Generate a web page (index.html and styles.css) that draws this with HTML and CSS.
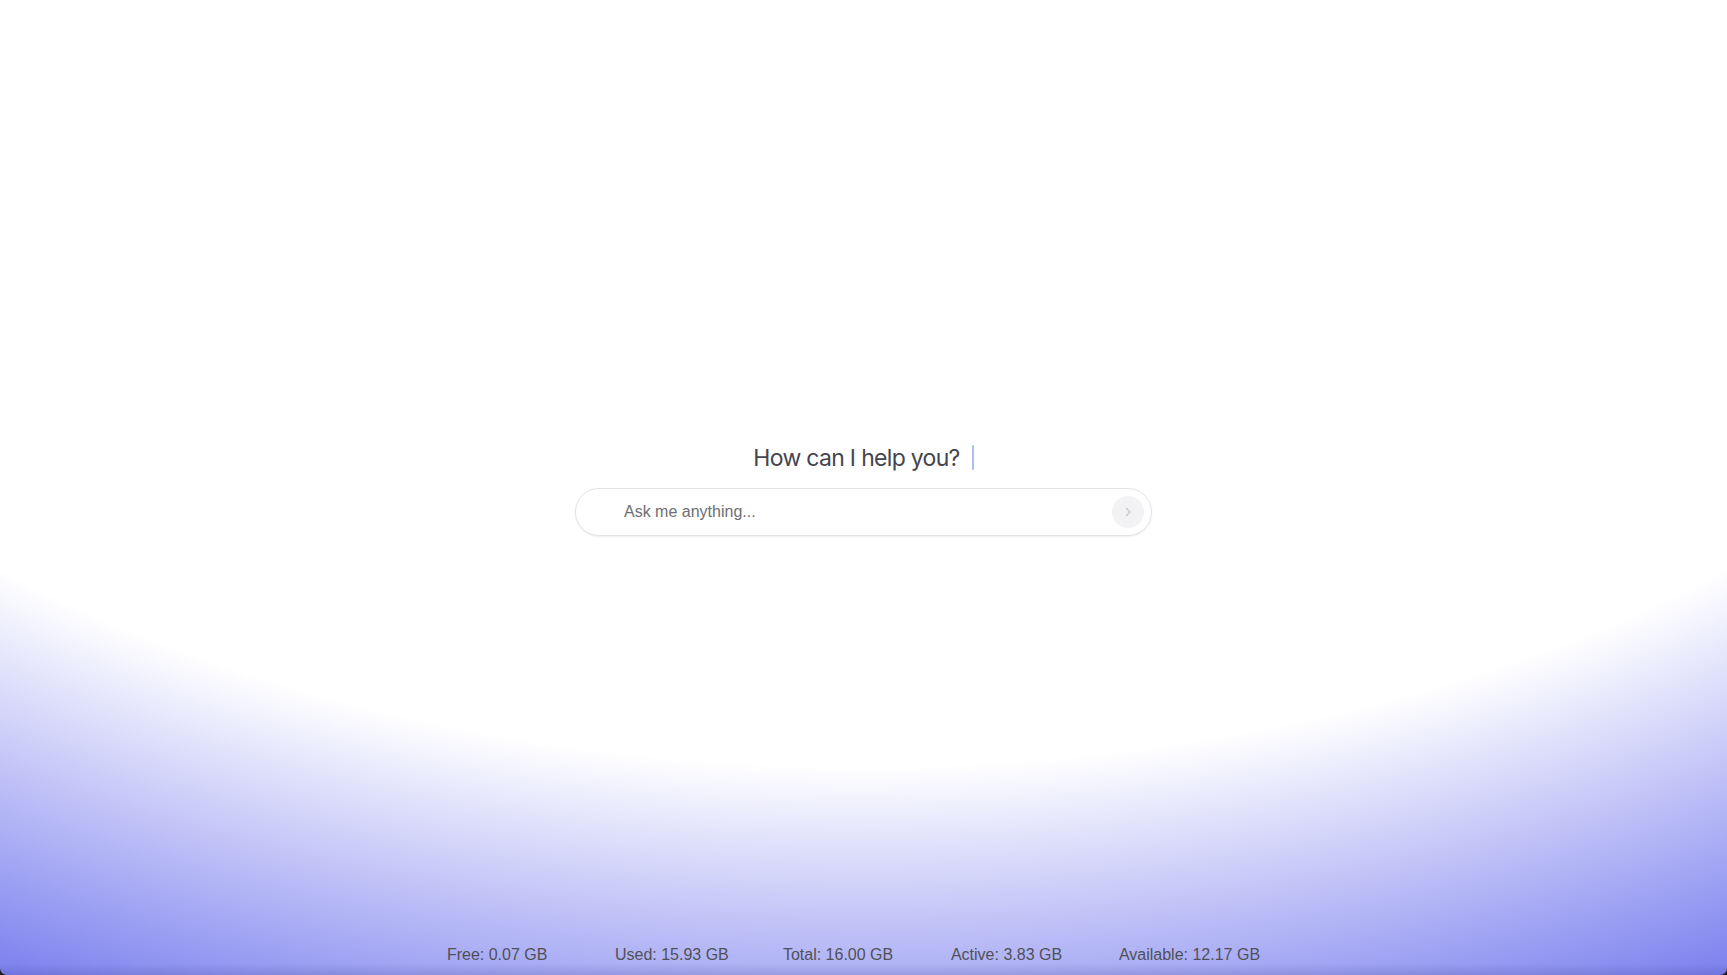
FILE: index.html
```html
<!DOCTYPE html>
<html lang="en">
<head>
<meta charset="utf-8">
<title>Assistant</title>
<link rel="stylesheet" href="styles.css">
</head>
<body>
<div class="app">
  <main class="main">
    <div class="prompt">
      <h1 class="title">How can I help you?</h1>
      <span class="caret"></span>
    </div>
    <form class="search">
      <input class="search-input" type="text" placeholder="Ask me anything...">
      <button class="send" type="button" aria-label="Send">
        <svg width="10" height="10" viewBox="0 0 10 10" fill="none"><path d="M3.5 1.5 L7 5 L3.5 8.5" stroke="#c2c3c9" stroke-width="1.2" stroke-linecap="round" stroke-linejoin="round"/></svg>
      </button>
    </form>
  </main>
  <footer class="stats">
    <span class="stat">Free: 0.07 GB</span>
    <span class="stat">Used: 15.93 GB</span>
    <span class="stat">Total: 16.00 GB</span>
    <span class="stat">Active: 3.83 GB</span>
    <span class="stat">Available: 12.17 GB</span>
  </footer>
</div>
</body>
</html>
```
FILE: styles.css
```css
html, body {
  margin: 0;
  padding: 0;
  height: 100%;
  background: #1e1f1e;
}
body {
  font-family: "Liberation Sans", Arial, sans-serif;
}
.app {
  height: 100vh;
  display: flex;
  flex-direction: column;
  border-radius: 0 0 7px 7px;
  overflow: hidden;
  background:
    linear-gradient(to top, rgba(50, 52, 120, 0.16), rgba(50, 52, 120, 0) 12px),
    radial-gradient(ellipse 1852px 1101px at 50% 0, #ffffff 69.6%, #7b80ee 100%);
}
.main {
  flex: 1;
  display: flex;
  flex-direction: column;
  align-items: center;
  justify-content: center;
  padding-top: 41px;
  box-sizing: border-box;
  gap: 14px;
}
.prompt {
  display: flex;
  align-items: center;
  gap: 12px;
  height: 34px;
  padding-top: 2px;
  box-sizing: border-box;
}
.title {
  margin: 0;
  font-family: Inter, "Liberation Sans", sans-serif;
  font-weight: 400;
  font-size: 23px;
  letter-spacing: -0.03em;
  line-height: 32px;
  color: #45454c;
}
.caret {
  width: 2px;
  height: 25px;
  background: #a9bff2;
  border-radius: 1px;
}
.search {
  margin: 0;
  width: 577px;
  height: 48px;
  box-sizing: border-box;
  display: flex;
  align-items: center;
  border: 1px solid #e4e4e7;
  border-radius: 24px;
  background: #ffffff;
  box-shadow: 0 1px 2px rgba(0, 0, 0, 0.07);
  padding: 0 7px 0 48px;
}
.search-input {
  flex: 1;
  border: none;
  outline: none;
  background: transparent;
  font-family: "Liberation Sans", Arial, sans-serif;
  font-size: 16px;
  color: #333;
  padding: 0;
  height: 100%;
}
.search-input::placeholder {
  color: #6e6e72;
}
.send {
  width: 32px;
  height: 32px;
  border-radius: 50%;
  border: none;
  background: #f2f2f4;
  display: flex;
  align-items: center;
  justify-content: center;
  padding: 0;
}
.stats {
  display: flex;
  justify-content: center;
  gap: 48px;
  padding: 11px 20px 10px 0;
  font-size: 16px;
  line-height: 20px;
  color: #505058;
}
.stat {
  min-width: 120px;
  white-space: nowrap;
}
```
